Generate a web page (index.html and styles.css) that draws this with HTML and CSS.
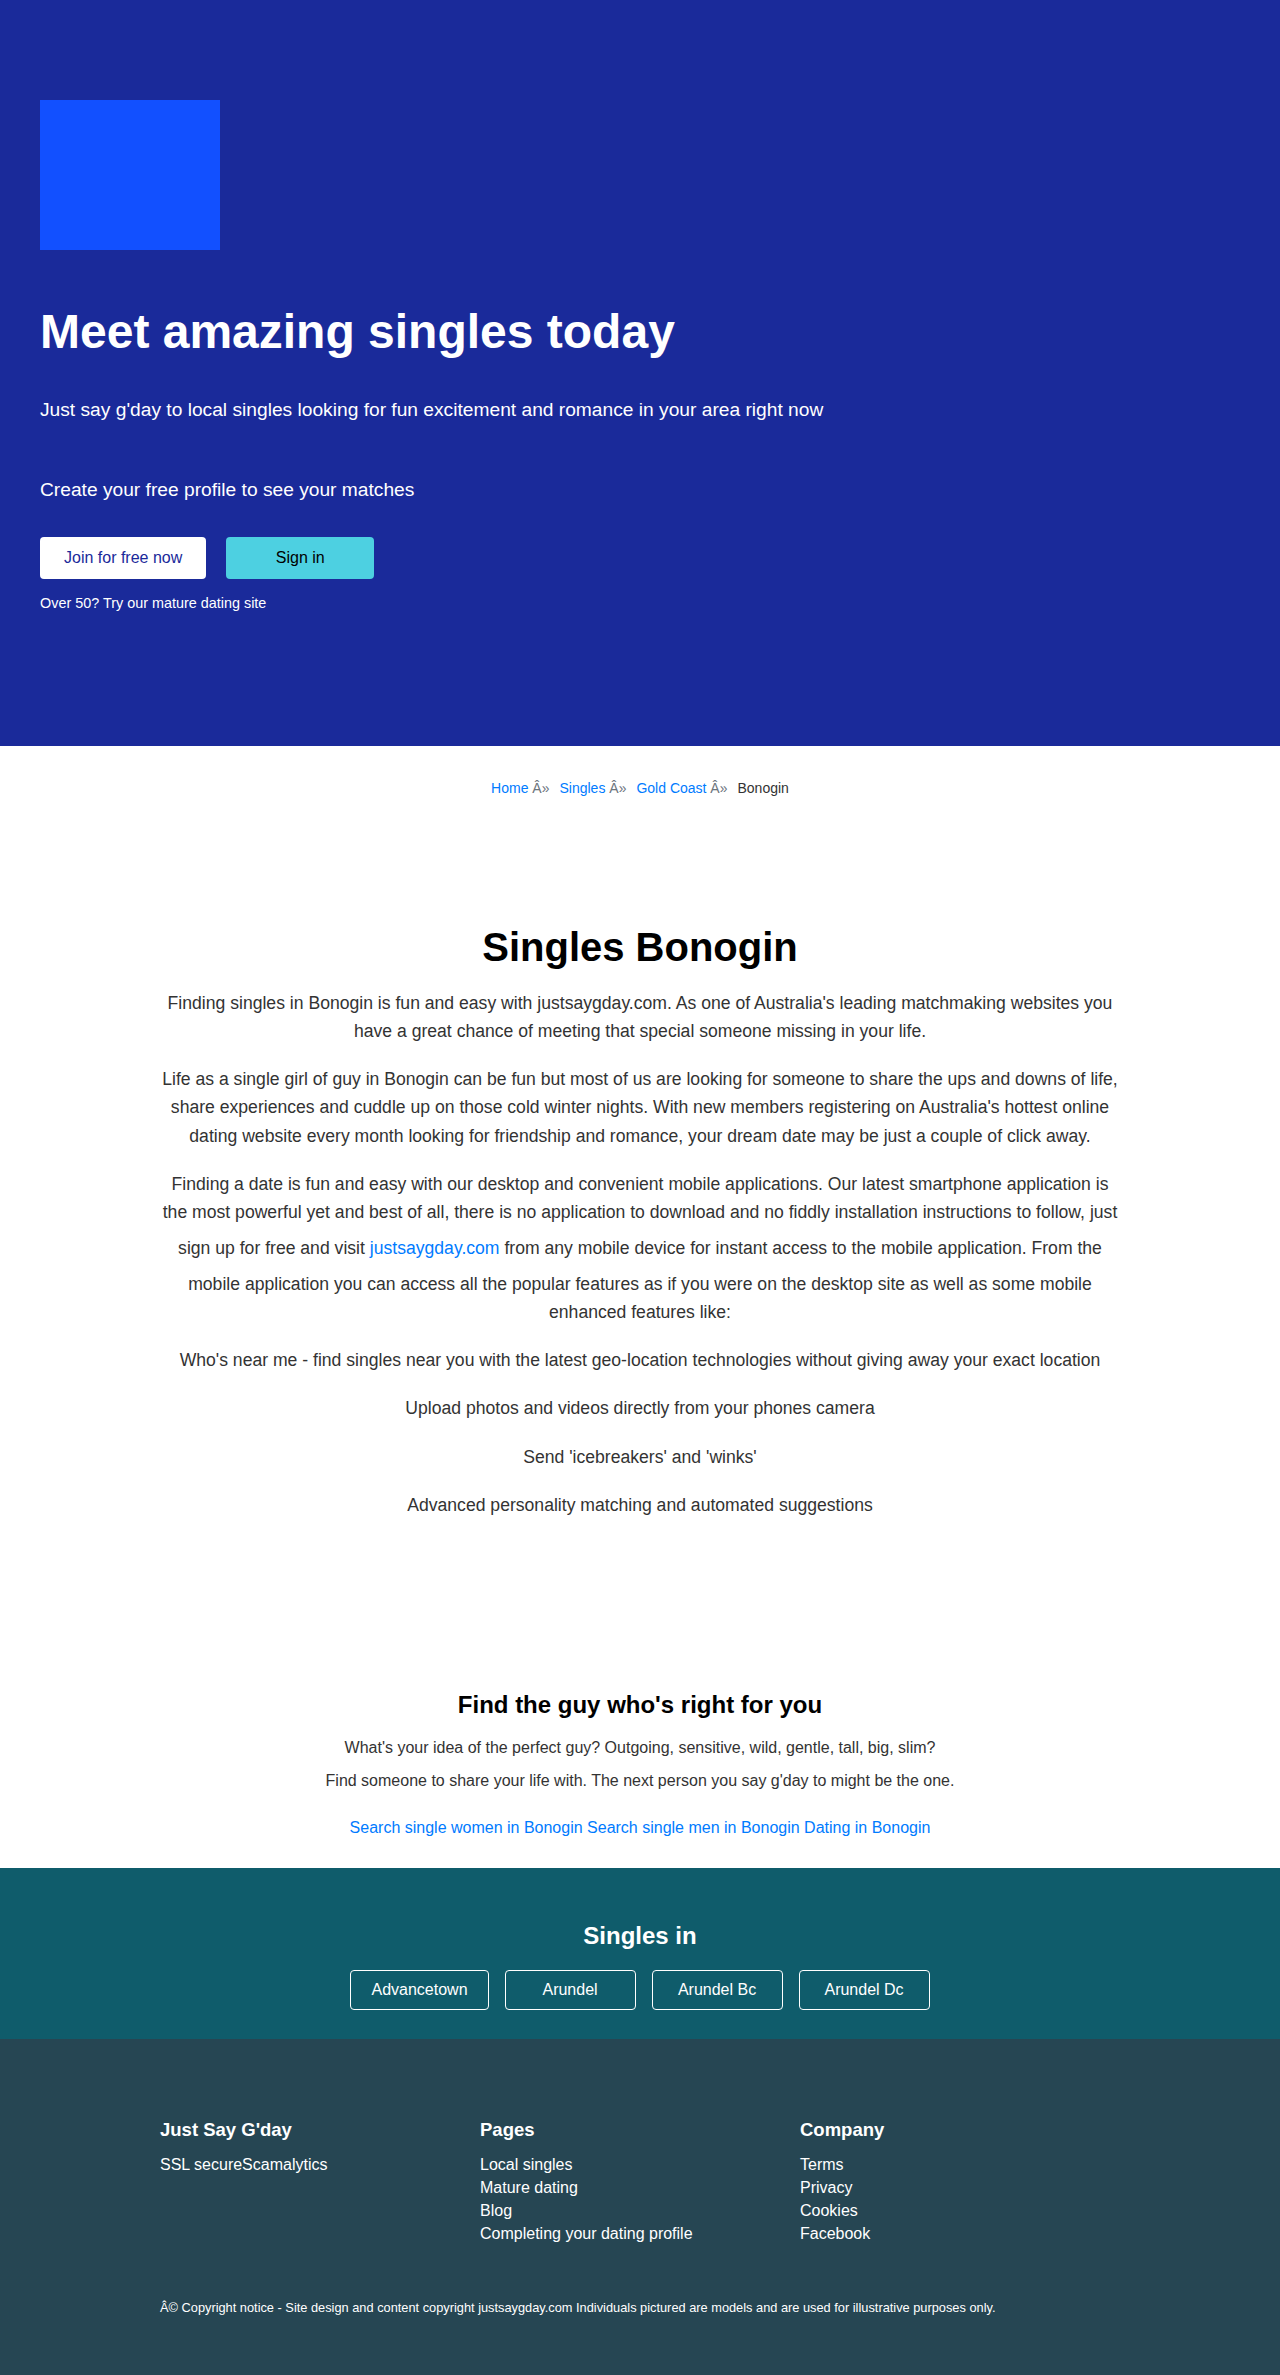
FILE: index.html
```html
<!DOCTYPE html>
<html lang="en">
<head>
<meta charset="utf-8">
<title>Singles Bonogin</title>
<link rel="stylesheet" href="styles.css">
</head>
<body>
<header class="hero">
  <div class="logo"></div>
  <h1 class="hero-title">Meet amazing singles today</h1>
  <p class="hero-lead">Just say g'day to local singles looking for fun excitement and romance in your area right now</p>
  <p class="hero-cta">Create your free profile to see your matches</p>
  <div class="hero-actions">
    <a class="btn btn-join" href="#">Join for free now</a>
    <a class="btn btn-signin" href="#">Sign in</a>
  </div>
  <p class="hero-mature"><a href="#">Over 50? Try our mature dating site</a></p>
</header>

<nav class="crumbs">
  <ol class="crumb-list">
    <li><a href="#">Home</a> <span class="sep">Â»</span></li>
    <li><a href="#">Singles</a> <span class="sep">Â»</span></li>
    <li><a href="#">Gold Coast</a> <span class="sep">Â»</span></li>
    <li class="current">Bonogin</li>
  </ol>
</nav>

<main class="content">
  <h1 class="page-title">Singles Bonogin</h1>
  <p>Finding singles in Bonogin is fun and easy with justsaygday.com. As one of Australia's leading matchmaking websites you have a great chance of meeting that special someone missing in your life.</p>
  <p>Life as a single girl of guy in Bonogin can be fun but most of us are looking for someone to share the ups and downs of life, share experiences and cuddle up on those cold winter nights. With new members registering on Australia's hottest online dating website every month looking for friendship and romance, your dream date may be just a couple of click away.</p>
  <p>Finding a date is fun and easy with our desktop and convenient mobile applications. Our latest smartphone application is the most powerful yet and best of all, there is no application to download and no fiddly installation instructions to follow, just sign up for free and visit <a class="inline-link" href="#">justsaygday.com</a> from any mobile device for instant access to the mobile application. From the mobile application you can access all the popular features as if you were on the desktop site as well as some mobile enhanced features like:</p>
  <p>Who's near me - find singles near you with the latest geo-location technologies without giving away your exact location</p>
  <p>Upload photos and videos directly from your phones camera</p>
  <p>Send 'icebreakers' and 'winks'</p>
  <p>Advanced personality matching and automated suggestions</p>
</main>

<section class="guy">
  <h2 class="guy-title">Find the guy who's right for you</h2>
  <p>What's your idea of the perfect guy? Outgoing, sensitive, wild, gentle, tall, big, slim?</p>
  <p>Find someone to share your life with. The next person you say g'day to might be the one.</p>
  <div class="guy-links">
    <a href="#">Search single women in Bonogin</a> <a href="#">Search single men in Bonogin</a> <a href="#">Dating in Bonogin</a>
  </div>
</section>

<section class="nearby">
  <h2 class="nearby-title">Singles in</h2>
  <div class="nearby-list">
    <a class="place" href="#">Advancetown</a>
    <a class="place" href="#">Arundel</a>
    <a class="place" href="#">Arundel Bc</a>
    <a class="place" href="#">Arundel Dc</a>
  </div>
</section>

<footer class="footer">
  <div class="footer-cols">
    <div class="footer-col">
      <h3 class="footer-head">Just Say G'day</h3>
      <p class="footer-text">SSL secureScamalytics</p>
    </div>
    <div class="footer-col">
      <h3 class="footer-head">Pages</h3>
      <ul class="footer-list">
        <li><a href="#">Local singles</a></li>
        <li><a href="#">Mature dating</a></li>
        <li><a href="#">Blog</a></li>
        <li><a href="#">Completing your dating profile</a></li>
      </ul>
    </div>
    <div class="footer-col">
      <h3 class="footer-head">Company</h3>
      <ul class="footer-list">
        <li><a href="#">Terms</a></li>
        <li><a href="#">Privacy</a></li>
        <li><a href="#">Cookies</a></li>
        <li><a href="#">Facebook</a></li>
      </ul>
    </div>
  </div>
  <p class="copyright">Â© Copyright notice - Site design and content copyright justsaygday.com Individuals pictured are models and are used for illustrative purposes only.</p>
</footer>
</body>
</html>
```

FILE: styles.css
```css
* { box-sizing: border-box; }

html, body {
  margin: 0;
  padding: 0;
}

body {
  font-family: "Liberation Sans", Arial, Helvetica, sans-serif;
  font-size: 16px;
  color: #333;
  background: #fff;
}

a { text-decoration: none; }

/* HERO */
.hero {
  height: 746px;
  background: #1a2a9a;
  color: #fff;
  padding: 100px 40px 0;
}

.logo {
  width: 180px;
  height: 150px;
  background: #1250ff;
}

.hero-title {
  margin: 54px 0 0;
  font-size: 48px;
  font-weight: 700;
  line-height: normal;
}

.hero-lead {
  margin: 40px 0 0;
  font-size: 19.2px;
  line-height: normal;
}

.hero-cta {
  margin: 58px 0 0;
  font-size: 19.2px;
  line-height: normal;
}

.hero-actions {
  display: flex;
  gap: 20px;
  margin-top: 36px;
}

.btn {
  display: inline-block;
  min-width: 148px;
  padding: 12px 24px;
  border-radius: 4px;
  font-size: 16px;
  line-height: 18px;
  text-align: center;
}

.btn-join {
  background: #fff;
  color: #1a2a9a;
}

.btn-signin {
  background: #4dd0e1;
  color: #000;
}

.hero-mature {
  margin: 16px 0 0;
  font-size: 14.4px;
  line-height: normal;
}

.hero-mature a { color: #fff; }

/* BREADCRUMBS */
.crumbs {
  padding-top: 34px;
}

.crumb-list {
  list-style: none;
  margin: 0;
  padding: 0;
  display: flex;
  justify-content: center;
  gap: 10px;
  font-size: 14px;
  line-height: 16px;
}

.crumb-list a { color: #007bff; }

.sep { color: #6c757d; }

.current { color: #333; }

/* MAIN CONTENT */
.content {
  width: 960px;
  margin: 0 auto;
  padding: 128px 0 0;
  text-align: center;
}

.page-title {
  margin: 0 0 19px;
  font-size: 40px;
  font-weight: 700;
  line-height: 46px;
  color: #000;
}

.content p {
  margin: 0 0 20px;
  font-size: 17.6px;
  line-height: 1.6;
}

.inline-link {
  line-height: 44px;
  color: #007bff;
}

/* GUY SECTION */
.guy {
  padding: 152px 0 28px;
  text-align: center;
}

.guy-title {
  margin: 0 0 16px;
  font-size: 24px;
  font-weight: 700;
  line-height: 28px;
  color: #000;
}

.guy p {
  margin: 0 0 8px;
  font-size: 16px;
  line-height: 25px;
}

.guy-links {
  margin-top: 22px;
  font-size: 16px;
  line-height: 25px;
}

.guy-links a { color: #007bff; }

/* NEARBY */
.nearby {
  background: #0f5c6b;
  color: #fff;
  padding: 54px 0 29px;
  text-align: center;
}

.nearby-title {
  margin: 0 0 20px;
  font-size: 24px;
  font-weight: 700;
  line-height: 28px;
}

.nearby-list {
  display: flex;
  justify-content: center;
  gap: 16px;
}

.place {
  min-width: 131px;
  padding: 10px 20px;
  border: 1px solid #fff;
  border-radius: 4px;
  color: #fff;
  font-size: 16px;
  line-height: 18px;
  text-align: center;
}

/* FOOTER */
.footer {
  background: #264653;
  color: #fff;
  padding: 80px 0 63px;
}

.footer-cols {
  width: 960px;
  margin: 0 auto;
  display: grid;
  grid-template-columns: repeat(3, 1fr);
}

.footer-head {
  margin: 0 0 12px;
  font-size: 18.5px;
  font-weight: 700;
  line-height: 22px;
}

.footer-text {
  margin: 0;
  font-size: 16px;
  line-height: 23px;
}

.footer-list {
  list-style: none;
  margin: 0;
  padding: 0;
  font-size: 16px;
  line-height: 23px;
}

.footer-list a { color: #fff; }

.copyright {
  width: 960px;
  margin: 55px auto 0;
  font-size: 12.8px;
  line-height: 15px;
}
```
